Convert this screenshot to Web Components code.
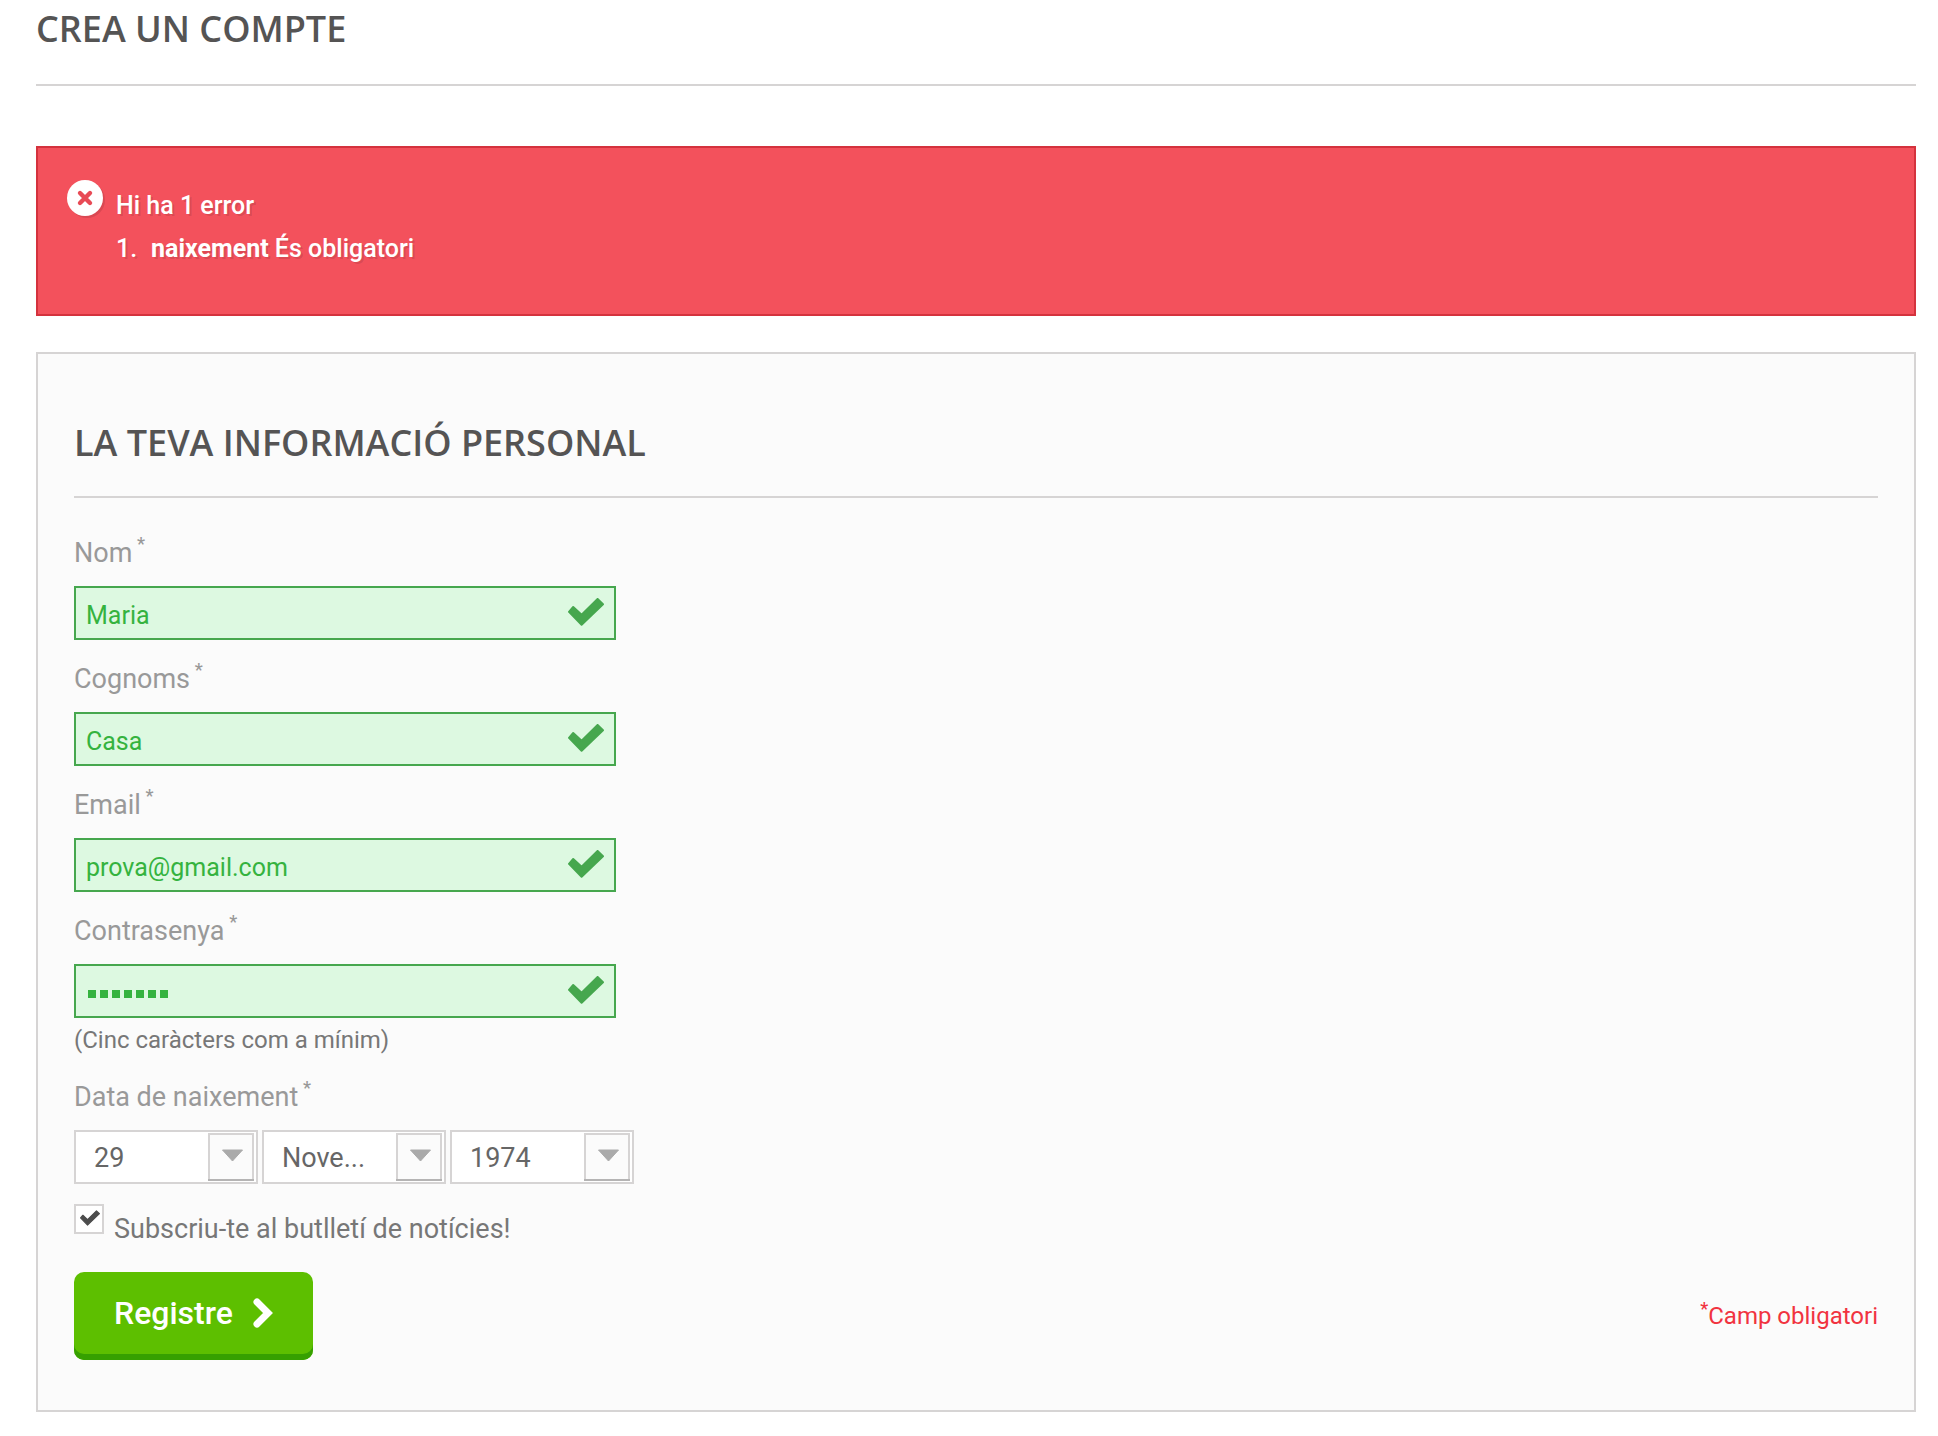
<!DOCTYPE html>
<html lang="ca">
<head>
<meta charset="utf-8">
<title>Crea un compte</title>
<style>
  body {
    margin: 0;
    background: #fff;
    color: #777;
    font: 24px/32px Roboto, "Open Sans", sans-serif;
  }
</style>
</head>
<body>

<account-page>
  <section-title level="1">Crea un compte</section-title>
  <error-alert>
    <span slot="title">Hi ha 1 error</span>
    <b>naixement</b> És obligatori
  </error-alert>
  <form-panel>
    <section-title level="2">La teva informació personal</section-title>
    <text-field label="Nom" value="Maria"></text-field>
    <text-field label="Cognoms" value="Casa"></text-field>
    <text-field label="Email" type="email" value="prova@gmail.com"></text-field>
    <text-field label="Contrasenya" type="password" value="secret1">(Cinc caràcters com a mínim)</text-field>
    <date-field label="Data de naixement"></date-field>
    <check-field>Subscriu-te al butlletí de notícies!</check-field>
    <form-footer>
      <submit-button>Registre</submit-button>
      <required-note slot="note">Camp obligatori</required-note>
    </form-footer>
  </form-panel>
</account-page>

<script>
  const CHECK = '<svg viewBox="0 0 36 28" aria-hidden="true"><path d="M1 13.8 5.200 9 13.600 16.800 29.600 1 35 6.200 13.600 26.800Z" stroke-width="2" stroke-linejoin="round"/></svg>';
  const LABEL = `
    label, legend {
      display: block; padding: 0; margin: 0 0 15px;
      font-size: 27px; line-height: 36px; color: #999;
    }
    sup { margin-left: -2px; font-size: 18px; font-weight: 500; line-height: 0; vertical-align: 12px; }
  `;
  const define = (name, render) => customElements.define(name, class extends HTMLElement {
    connectedCallback() {
      if (this.shadowRoot) return;
      const tpl = document.createElement('template');
      tpl.innerHTML = render(this);
      this.attachShadow({ mode: 'open' }).append(tpl.content.cloneNode(true));
      if (this.localName === 'text-field') this.wireMask();
    }
    wireMask() {
      const mask = this.shadowRoot.querySelector('.mask');
      if (!mask) return;
      const input = this.shadowRoot.querySelector('input');
      const draw = () => mask.replaceChildren(...Array.from(input.value, () => document.createElement('i')));
      input.addEventListener('input', draw);
      draw();
    }
  });

  define('account-page', () => `
    <style>
      :host { display: block; }
      main { padding: 9px 22px 24px 36px; }
    </style>
    <main><slot></slot></main>
  `);

  define('section-title', el => {
    const h = 'h' + el.getAttribute('level');
    return `
    <style>
      :host { display: block; }
      ${h} {
        margin: 0; border-bottom: 2px solid #d6d4d4;
        font: 600 36px/40px "Open Sans", sans-serif;
        text-transform: uppercase; color: #555454;
      }
      h1 { padding-bottom: 35px; }
      h2 { padding-bottom: 33px; }
    </style>
    <${h}><slot></slot></${h}>`;
  });

  define('error-alert', () => `
    <style>
      :host {
        display: flex; align-items: flex-start; gap: 13px;
        margin: 60px 0 36px; padding: 32px 29px 44px;
        border: 2px solid #d4323d; background: #f3515c;
        color: #fff; font-size: 25px; font-weight: 500; line-height: 43px;
        text-shadow: 2px 2px rgba(0, 0, 0, .1);
      }
      svg { width: 36px; height: 36px; flex: none; filter: drop-shadow(2px 2px rgba(0, 0, 0, .1)); }
      .body { padding-top: 4px; }
      p, ol { margin: 0; }
      ol { padding: 0; list-style: none; }
      li { display: flex; }
      li::before { content: "1."; width: 35px; }
    </style>
    <svg viewBox="0 0 36 36" aria-hidden="true">
      <circle cx="18" cy="18" r="18" fill="#fff"/>
      <path d="M13 13 23 23M23 13 13 23" stroke="#e84a55" stroke-width="4.4" stroke-linecap="round"/>
    </svg>
    <div class="body" role="alert">
      <p><slot name="title"></slot></p>
      <ol><li><span><slot></slot></span></li></ol>
    </div>
  `);

  define('form-panel', () => `
    <style>
      :host { display: block; border: 2px solid #d6d4d4; background: #fbfbfb; }
      form { padding: 69px 36px 50px; }
      ::slotted(section-title) { margin-bottom: 37px; }
      ::slotted(text-field) { margin-bottom: 21px; }
      ::slotted(date-field) { margin-bottom: 20px; }
    </style>
    <form novalidate><slot></slot></form>
  `);

  define('text-field', el => {
    const type = el.getAttribute('type') || 'text';
    const secret = type === 'password';
    return `
    <style>
      :host { display: block; }
      ${LABEL}
      .box { display: grid; width: 542px; max-width: 100%; }
      .box > * { grid-area: 1 / 1; }
      input {
        box-sizing: border-box; width: 100%; height: 54px; margin: 0; padding: 4px 54px 0 10px;
        border: 2px solid #46a74e; border-radius: 0; background: #ddf9e1; outline: 0;
        font: 25px Roboto, sans-serif; color: ${secret ? 'transparent' : '#35b33f'}; caret-color: #35b33f;
      }
      svg {
        width: 36px; height: 28px; fill: #46a74e; stroke: #46a74e; pointer-events: none;
        place-self: center end; margin: 0 12px 2px;
      }
      .mask { display: flex; gap: 4px; align-self: center; padding: 6px 0 0 14px; pointer-events: none; }
      .mask i { width: 8px; height: 8px; background: #35b33f; }
      .hint { padding: 6px 0 2px; }
    </style>
    <label for="in">${el.getAttribute('label')} <sup>*</sup></label>
    <div class="box">
      <input id="in" type="${type}" value="${el.getAttribute('value')}">
      ${secret ? '<div class="mask" aria-hidden="true"></div>' : ''}
      ${CHECK}
    </div>
    ${secret ? '<div class="hint"><slot></slot></div>' : ''}`;
  });

  define('date-field', el => {
    const pick = (name, items) => `
      <span class="pick">
        <select aria-label="${name}">${items.map((t, i) => `<option${i ? '' : ' selected'}>${t}</option>`).join('')}</select>
        <svg viewBox="0 0 46 48" aria-hidden="true">
          <rect x="1" y="1" width="44" height="46" fill="#fbfbfb" stroke="#d6d4d4" stroke-width="2"/>
          <path d="M0 46H46V48H0Z" fill="#b5b4b4"/>
          <path d="M14.500 17H34.500L24.500 28Z" fill="#aaa" stroke="#aaa" stroke-linejoin="round"/>
        </svg>
      </span>`;
    return `
    <style>
      :host { display: block; }
      fieldset { margin: 0; padding: 0; border: 0; min-width: 0; }
      ${LABEL}
      .row { display: flex; gap: 4px; }
      .pick { display: grid; width: 184px; }
      .pick > * { grid-area: 1 / 1; }
      select {
        appearance: none; box-sizing: border-box; width: 100%; height: 54px; margin: 0;
        padding: 2px 50px 0 18px; border: 2px solid #d6d4d4; border-radius: 0; background: #fff;
        font: 27px Roboto, sans-serif; color: #666; outline: 0;
      }
      svg { width: 46px; height: 48px; place-self: center end; margin-right: 4px; pointer-events: none; }
    </style>
    <fieldset>
      <legend>${el.getAttribute('label')} <sup>*</sup></legend>
      <div class="row">
        ${pick('Dia', ['29'])}${pick('Mes', ['Nove...'])}${pick('Any', ['1974'])}
      </div>
    </fieldset>`;
  });

  define('check-field', () => `
    <style>
      :host { display: flex; align-items: flex-start; gap: 10px; margin-bottom: 25px; }
      .box { display: grid; width: 30px; height: 30px; }
      .box > * { grid-area: 1 / 1; }
      input {
        appearance: none; box-sizing: border-box; width: 30px; height: 30px; margin: 0;
        border: 2px solid #d6d4d4; background: #fff;
      }
      svg { width: 20px; height: 16px; place-self: center; margin: 0 0 2px 2px; fill: #4c4c4c; stroke: #4c4c4c; pointer-events: none; visibility: hidden; }
      input:checked + svg { visibility: visible; }
      label { padding-top: 7px; font-size: 27px; line-height: 36px; }
    </style>
    <span class="box"><input type="checkbox" id="news" checked>${CHECK}</span>
    <label for="news"><slot></slot></label>
  `);

  define('form-footer', () => `
    <style>
      :host { display: flex; align-items: center; justify-content: space-between; }
    </style>
    <slot></slot><slot name="note"></slot>
  `);

  define('submit-button', () => `
    <style>
      :host { display: block; }
      button {
        display: flex; align-items: center; gap: 20px; height: 88px; margin: 0; padding: 0 40px 6px;
        border: 0; border-radius: 10px; background: #5dbf00; box-shadow: inset 0 -6px #36a000;
        font: 500 32px/40px Roboto, sans-serif; color: #fff; cursor: pointer;
      }
      svg { width: 20px; height: 30px; }
    </style>
    <button type="button"><slot></slot>
      <svg viewBox="0 0 20 30" aria-hidden="true"><path d="M4 4 15 15 4 26" fill="none" stroke="#fff" stroke-width="7" stroke-linecap="round"/></svg>
    </button>
  `);

  define('required-note', () => `
    <style>
      :host { display: block; color: #f13340; }
      sup { font-size: 18px; font-weight: 500; line-height: 0; vertical-align: 9px; }
    </style>
    <sup>*</sup><slot></slot>
  `);
</script>
</body>
</html>
